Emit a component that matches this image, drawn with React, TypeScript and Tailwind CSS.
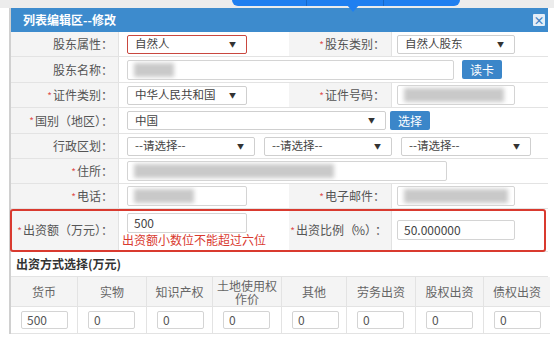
import React from "react";

const font = { fontFamily: '"Noto Sans CJK SC", "Noto Sans", sans-serif' };

function Label({ text, star, wide }: { text: string; star?: boolean; wide?: boolean }) {
  return (
    <div
      className={`flex items-center justify-end whitespace-nowrap bg-[#f4f4f4] text-[12px] text-[#555] border-r border-[#e2e2e2] ${
        wide ? "pr-[6px]" : "pr-[5px]"
      }`}
    >
      {star && <span className="text-[#e05050] text-[10px] mr-[1px]">*</span>}
      {text}
    </div>
  );
}

function Select({ text, w, red }: { text: string; w: string; red?: boolean }) {
  return (
    <div
      className={`h-[19px] ${w} flex items-center gap-[6px] pl-[7px] pr-[10px] text-[11.5px] text-[#444] bg-white rounded-[2px] border ${
        red ? "border-[#c9473f]" : "border-[#cfcfcf]"
      }`}
    >
      <span className="flex-1 min-w-0 whitespace-nowrap overflow-hidden">{text}</span>
      <span className="text-[7px] text-[#333]">▼</span>
    </div>
  );
}

function Input({ w, children }: { w: string; children?: React.ReactNode }) {
  return (
    <div
      className={`h-[20px] ${w} flex items-center px-[6px] text-[12px] text-[#444] bg-white rounded-[2px] border border-[#d4d4d4] overflow-hidden`}
    >
      {children}
    </div>
  );
}

function Blur({ w }: { w: string }) {
  return <div className={`h-[14px] ${w} bg-[#c9c9c9] blur-[2px]`} />;
}

function Btn({ text }: { text: string }) {
  return (
    <div className="h-[19px] w-[40px] flex items-center justify-center rounded-[2px] bg-[#3b86c9] text-white text-[12px]">
      {text}
    </div>
  );
}

const row = "grid grid-cols-[108px_170px_103px_158px] border-b border-[#e3e3e3]";

export default function App() {
  const heads = ["货币", "实物", "知识产权", "土地使用权作价", "其他", "劳务出资", "股权出资", "债权出资"];
  const vals = ["500", "0", "0", "0", "0", "0", "0", "0"];
  return (
    <div className="w-[554px] h-[343px] overflow-hidden bg-white relative" style={font}>
      {/* tooltip bubble above */}
      <div className="absolute left-[232px] top-0 w-[228px] h-[6px] bg-[#1f7ff0] rounded-b-[6px] flex z-10">
        <div className="w-[75px] border-r border-[#1668c9]" />
        <div className="w-[77px] border-r border-[#1668c9]" />
      </div>
      <div className="absolute left-[347px] top-[5px] w-0 h-0 border-l-[6px] border-r-[6px] border-t-[7px] border-l-transparent border-r-transparent border-t-[#1f7ff0] z-10" />

      <div className="h-[8px] bg-[#ececec]" />
      <div className="ml-[9px] w-[539px] border-l-2 border-[#d0d0d0]">
        {/* header */}
        <div className="h-[24px] bg-[#3d8bcd] flex items-center justify-between pl-[12px] pr-[3px]">
          <span className="text-white text-[12px] font-bold">列表编辑区--修改</span>
          <div className="w-[12px] h-[12px] bg-[#e3edf7] rounded-[1px] flex items-center justify-center text-[#3d7fc0] text-[11px] font-bold leading-none">
            ×
          </div>
        </div>

        <div className={`${row} h-[25px]`}>
          <Label text="股东属性：" />
          <div className="flex items-center pl-2">
            <Select text="自然人" w="w-[120px]" red />
          </div>
          <Label text="股东类别：" star wide />
          <div className="flex items-center pl-[5px]">
            <Select text="自然人股东" w="w-[118px]" />
          </div>
        </div>

        <div className={`${row} h-[26px]`}>
          <Label text="股东名称：" />
          <div className="col-span-3 flex items-center pl-2 gap-[8px]">
            <Input w="w-[327px]">
              <Blur w="w-[40px]" />
            </Input>
            <Btn text="读卡" />
          </div>
        </div>

        <div className={`${row} h-[25px]`}>
          <Label text="证件类别：" star />
          <div className="flex items-center pl-2">
            <Select text="中华人民共和国" w="w-[120px]" />
          </div>
          <Label text="证件号码：" star wide />
          <div className="flex items-center pl-[5px]">
            <Input w="w-[118px]">
              <Blur w="w-[100px]" />
            </Input>
          </div>
        </div>

        <div className={`${row} h-[26px]`}>
          <Label text="国别（地区）：" star />
          <div className="col-span-3 flex items-center pl-2 gap-[4px]">
            <Select text="中国" w="w-[259px]" />
            <Btn text="选择" />
          </div>
        </div>

        <div className={`${row} h-[25px]`}>
          <Label text="行政区划：" />
          <div className="col-span-3 flex items-center pl-2 gap-[9px]">
            <Select text="--请选择--" w="w-[128px]" />
            <Select text="--请选择--" w="w-[128px]" />
            <Select text="--请选择--" w="w-[130px]" />
          </div>
        </div>

        <div className={`${row} h-[25px]`}>
          <Label text="住所：" star />
          <div className="col-span-3 flex items-center pl-2">
            <Input w="w-[320px]">
              <Blur w="w-[200px]" />
            </Input>
          </div>
        </div>

        <div className={`${row} h-[25px]`}>
          <Label text="电话：" star />
          <div className="flex items-center pl-2">
            <Input w="w-[120px]">
              <Blur w="w-[60px]" />
            </Input>
          </div>
          <Label text="电子邮件：" star wide />
          <div className="flex items-center pl-[5px]">
            <Input w="w-[118px]">
              <Blur w="w-[105px]" />
            </Input>
          </div>
        </div>

        <div className="relative grid grid-cols-[108px_170px_103px_158px] h-[43px] border-b border-[#e3e3e3]">
          <div className="absolute -left-[1px] top-0 w-[536px] h-[43px] border-2 border-[#d93a2f] rounded-[3px]" />
          <Label text="出资额（万元）：" star />
          <div className="flex flex-col pl-2 pt-[4px]">
            <Input w="w-[120px]">500</Input>
            <span className="text-[12px] text-[#d93a2f] -ml-[5px] leading-[14px] whitespace-nowrap">
              出资额小数位不能超过六位
            </span>
          </div>
          <div className="flex items-center justify-end whitespace-nowrap bg-[#f4f4f4] text-[12px] text-[#555] border-r border-[#e2e2e2] pr-[4px]">
            <span className="text-[#e05050] text-[10px] mr-[1px]">*</span>
            出资比例<span className="tracking-[-2px]">（</span>%<span className="tracking-[-2px]">）</span>：
          </div>
          <div className="flex items-center pl-[5px]">
            <Input w="w-[118px]">50.000000</Input>
          </div>
        </div>

        <div className="h-[24px] flex items-center pl-[5px] text-[12px] font-bold text-[#333]">
          出资方式选择(万元)
        </div>

        <div className="grid grid-cols-[67px_69px_66px_69px_65px_69px_68px_66px] border-t border-[#e3e3e3]">
          {heads.map((h, i) => (
            <div
              key={h}
              className={`h-[30px] bg-[#f4f4f4] flex items-center justify-center text-center text-[12px] leading-[13px] text-[#666] border-b border-[#e3e3e3] ${
                i < 7 ? "border-r" : ""
              } ${i === 3 ? "px-[2px]" : ""}`}
            >
              {h}
            </div>
          ))}
          {vals.map((v, i) => (
            <div
              key={i}
              className={`h-[27px] flex items-center pl-[10px] border-b border-[#e3e3e3] ${i < 7 ? "border-r" : ""}`}
            >
              <div className="h-[18px] w-[47px] flex items-center px-[5px] text-[12px] text-[#555] border border-[#d4d4d4] rounded-[2px]">
                {v}
              </div>
            </div>
          ))}
        </div>
      </div>
    </div>
  );
}
